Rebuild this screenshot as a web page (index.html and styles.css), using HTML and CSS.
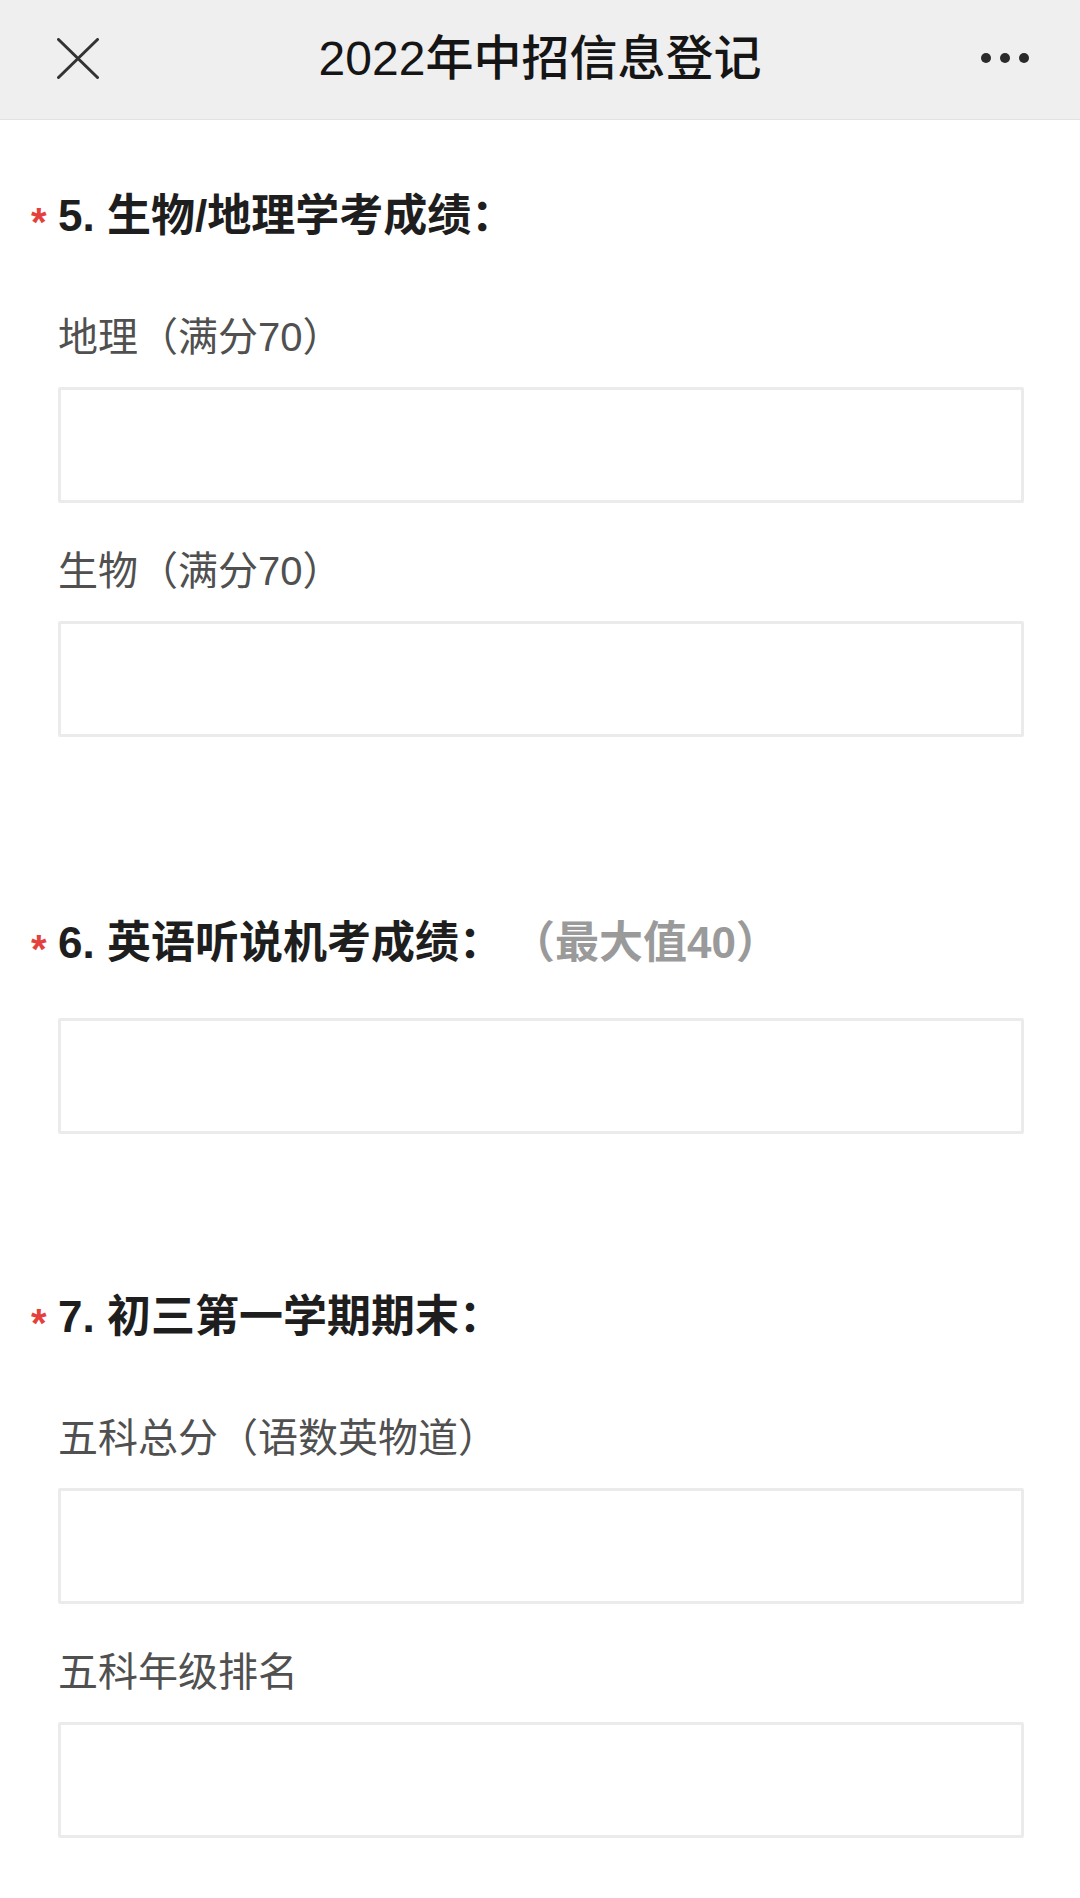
FILE: index.html
```html
<!DOCTYPE html>
<html lang="zh-CN">
<head>
<meta charset="utf-8">
<title>2022年中招信息登记</title>
<link rel="stylesheet" href="styles.css">
</head>
<body>
<header class="topbar">
  <div class="topbar-left">
    <svg class="icon-close" width="42" height="41" viewBox="0 0 42 41"><path d="M1.5 1.5 L40.5 39.5 M40.5 1.5 L1.5 39.5" stroke="#333" stroke-width="3" stroke-linecap="round" fill="none"/></svg>
  </div>
  <h1 class="topbar-title">2022年中招信息登记</h1>
  <div class="topbar-right">
    <span class="dot"></span><span class="dot"></span><span class="dot"></span>
  </div>
</header>

<main class="form">
  <section class="question q5">
    <h2 class="q-title"><span class="req">*</span>5. 生物/地理学考成绩：</h2>
    <div class="field">
      <div class="field-label">地理（满分70）</div>
      <div class="input-box"></div>
    </div>
    <div class="field">
      <div class="field-label">生物（满分70）</div>
      <div class="input-box"></div>
    </div>
  </section>

  <section class="question q6">
    <h2 class="q-title"><span class="req">*</span>6. 英语听说机考成绩：<span class="hint">（最大值40）</span></h2>
    <div class="input-box single"></div>
  </section>

  <section class="question q7">
    <h2 class="q-title"><span class="req">*</span>7. 初三第一学期期末：</h2>
    <div class="field">
      <div class="field-label">五科总分（语数英物道）</div>
      <div class="input-box"></div>
    </div>
    <div class="field">
      <div class="field-label">五科年级排名</div>
      <div class="input-box"></div>
    </div>
  </section>
</main>
</body>
</html>
```

FILE: styles.css
```css
* { box-sizing: border-box; }
html, body {
  margin: 0;
  padding: 0;
  background: #ffffff;
}
body {
  font-family: "Liberation Sans", "Noto Sans CJK SC", sans-serif;
  color: #222;
}

.topbar {
  height: 120px;
  background: #efefef;
  border-bottom: 1px solid #e2e2e2;
  display: grid;
  grid-template-columns: 1fr auto 1fr;
  align-items: center;
}
.topbar-left {
  padding-left: 57px;
  display: flex;
  align-items: center;
}
.icon-close { display: block; margin-top: -2px; }
.topbar-title {
  margin: 0;
  font-size: 48px;
  font-weight: 500;
  color: #151515;
  line-height: 60px;
  margin-top: -2px;
}
.topbar-right {
  display: flex;
  justify-content: flex-end;
  gap: 9px;
  padding-right: 51px;
  margin-top: -4px;
}
.dot {
  width: 10px;
  height: 10px;
  border-radius: 50%;
  background: #2a2a2a;
}

.form {
  padding: 0 56px 0 58px;
}

.q-title {
  margin: 0;
  font-size: 44px;
  font-weight: 700;
  line-height: 60px;
  height: 60px;
  color: #1e1e1e;
}
.req {
  display: inline-block;
  width: 27px;
  height: 60px;
  margin-left: -27px;
  padding-top: 12px;
  color: #e5413c;
  font-size: 40px;
  font-weight: 700;
  vertical-align: top;
  line-height: 48px;
}
.hint {
  color: #9a9a9a;
  margin-left: 30px;
}

.q5 { margin-top: 66px; }
.q6 { margin-top: 176px; }
.q7 { margin-top: 153px; }

.q-title + .field { margin-top: 63px; }
.field + .field { margin-top: 40px; }

.field-label {
  font-size: 40px;
  line-height: 56px;
  height: 56px;
  color: #505050;
  margin-bottom: 22px;
}

.input-box {
  height: 116px;
  border: 3px solid #ebebeb;
  border-radius: 2px;
  background: #fff;
}
.input-box.single { margin-top: 45px; }
```
